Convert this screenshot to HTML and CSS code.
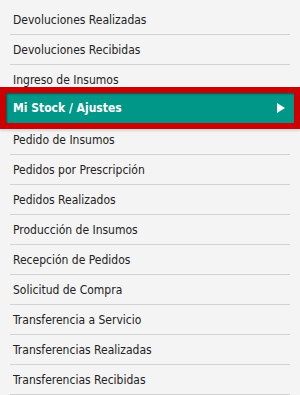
FILE: index.html
```html
<!DOCTYPE html>
<html>
<head>
<meta charset="utf-8">
<link rel="stylesheet" href="styles.css">
</head>
<body>
<ul class="menu">
  <li class="item">Devoluciones Realizadas</li>
  <li class="item">Devoluciones Recibidas</li>
  <li class="item">Ingreso de Insumos</li>
  <li class="item active"><span>Mi Stock / Ajustes</span><svg class="arrow" width="8" height="10" viewBox="0 0 8 10"><polygon points="0,0 8,5 0,10" fill="#fff"/></svg></li>
  <li class="item">Pedido de Insumos</li>
  <li class="item">Pedidos por Prescripción</li>
  <li class="item">Pedidos Realizados</li>
  <li class="item">Producción de Insumos</li>
  <li class="item">Recepción de Pedidos</li>
  <li class="item">Solicitud de Compra</li>
  <li class="item">Transferencia a Servicio</li>
  <li class="item">Transferencias Realizadas</li>
  <li class="item">Transferencias Recibidas</li>
</ul>
</body>
</html>
```
FILE: styles.css
```css
html, body {
  margin: 0;
  padding: 0;
  background: #f4f4f4;
}
body {
  font-family: "DejaVu Sans Condensed", "DejaVu Sans", Verdana, sans-serif;
  font-size: 12px;
  color: #222;
}
.menu {
  list-style: none;
  margin: 0;
  padding: 5px 10px 0 10px;
}
.item {
  height: 29px;
  line-height: 30px;
  padding-left: 3px;
  border-bottom: 1px solid #d2d2d2;
  white-space: nowrap;
}
.item.active {
  margin: 0 -4px;
  padding: 0 9px 0 7px;
  height: 30px;
  line-height: 30px;
  border-bottom: none;
  margin-top: -2px;
  margin-bottom: 2px;
  background: #009688;
  color: #fff;
  font-weight: bold;
  display: flex;
  align-items: center;
  justify-content: space-between;
  box-shadow: inset 1px 1px 2px rgba(0,0,0,0.45), 0 0 0 6px #cc0000, 0 2px 2px 6px rgba(0,0,0,0.12);
  position: relative;
}
.arrow {
  display: block;
}
```
